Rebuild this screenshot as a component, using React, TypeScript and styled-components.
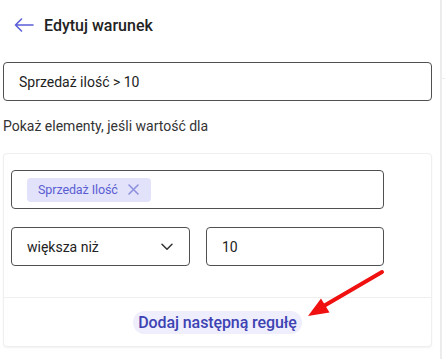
import React from "react";
import styled, { createGlobalStyle } from "styled-components";

const GlobalStyle = createGlobalStyle`
  html, body {
    margin: 0;
    padding: 0;
    background: #ffffff;
  }
  body {
    font-family: Roboto, "Noto Sans", "Liberation Sans", sans-serif;
    color: #222;
  }
`;

const Page = styled.div`
  position: relative;
  display: flex;
  height: 359px;
  width: 445px;
  overflow: hidden;
`;

const Main = styled.div`
  width: 429px;
  padding-left: 3px;
  display: flex;
  flex-direction: column;
`;

const Side = styled.div`
  margin-left: 8px;
  flex: 1;
  border-left: 2px solid #ececec;
  padding-top: 78px;
`;

const SideRule = styled.div`
  height: 1px;
  background: #eeeeee;
`;

const Header = styled.div`
  height: 50px;
  display: flex;
  align-items: center;
  gap: 10px;
  padding-left: 11px;
`;

const BackButton = styled.button`
  display: flex;
  align-items: center;
  border: none;
  background: none;
  padding: 0;
  color: #5b5fd6;
`;

const Title = styled.h1`
  margin: 0;
  font-size: 16px;
  font-weight: 500;
  color: #222;
`;

const TextField = styled.div<{ $width?: number }>`
  box-sizing: border-box;
  height: 39px;
  width: ${(p) => (p.$width ? `${p.$width}px` : "100%")};
  border: 1px solid #505050;
  border-radius: 4px;
  display: flex;
  align-items: center;
  justify-content: space-between;
  padding: 0 16px 0 15px;
  font-size: 14px;
  color: #222;
`;

const NameField = styled(TextField)`
  margin-top: 12px;
`;

const Label = styled.p`
  margin: 15px 0 0;
  line-height: 20px;
  font-size: 14px;
  color: #333;
`;

const Card = styled.div`
  margin-top: 17px;
  border: 1px solid #efefef;
  border-radius: 4px;
  box-shadow: 0 1px 2px rgba(0, 0, 0, 0.06);
  background: #fff;
`;

const CardBody = styled.div`
  padding: 16px 0 31px 7px;
  display: flex;
  flex-direction: column;
  gap: 18px;
`;

const Row = styled.div`
  display: flex;
  gap: 16px;
`;

const Chip = styled.span`
  display: inline-flex;
  align-items: center;
  gap: 10px;
  height: 24px;
  padding: 0 12px 0 11px;
  border-radius: 4px;
  background: #e2e2fa;
  color: #5a5ed2;
  font-size: 12.5px;
  letter-spacing: -0.1px;
`;

const ChipClose = styled.span`
  display: flex;
  color: #8e91e0;
`;

const Footer = styled.div`
  border-top: 1px solid #efefef;
  height: 48px;
  display: flex;
  align-items: center;
  justify-content: center;
`;

const AddRule = styled.button`
  border: none;
  background: #eeeefc;
  border-radius: 12px;
  height: 23px;
  padding: 0 5px;
  font-family: inherit;
  font-size: 16px;
  font-weight: 500;
  letter-spacing: -0.1px;
  color: #3d42b3;
`;

const Annotation = styled.svg`
  position: absolute;
  left: 300px;
  top: 262px;
`;

export default function App() {
  return (
    <>
      <GlobalStyle />
      <Page>
        <Main>
          <Header>
            <BackButton>
              <svg width="20" height="14" viewBox="0 0 20 14" fill="none">
                <path
                  d="M19 7H1.5M7.5 1L1.5 7l6 6"
                  stroke="currentColor"
                  strokeWidth="1.6"
                  strokeLinecap="round"
                  strokeLinejoin="round"
                />
              </svg>
            </BackButton>
            <Title>Edytuj warunek</Title>
          </Header>
          <NameField>Sprzedaż ilość &gt; 10</NameField>
          <Label>Pokaż elementy, jeśli wartość dla</Label>
          <Card>
            <CardBody>
              <TextField $width={373}>
                <Chip>
                  Sprzedaż Ilość
                  <ChipClose>
                    <svg width="11" height="11" viewBox="0 0 11 11">
                      <path
                        d="M1 1l9 9M10 1l-9 9"
                        stroke="currentColor"
                        strokeWidth="1.6"
                        strokeLinecap="round"
                      />
                    </svg>
                  </ChipClose>
                </Chip>
              </TextField>
              <Row>
                <TextField $width={179}>
                  większa niż
                  <svg width="12" height="8" viewBox="0 0 12 8" fill="none">
                    <path
                      d="M1 1.2l5 5 5-5"
                      stroke="#333"
                      strokeWidth="1.5"
                      strokeLinecap="round"
                      strokeLinejoin="round"
                    />
                  </svg>
                </TextField>
                <TextField $width={178}>10</TextField>
              </Row>
            </CardBody>
            <Footer>
              <AddRule>Dodaj następną regułę</AddRule>
            </Footer>
          </Card>
        </Main>
        <Side>
          <SideRule />
        </Side>
        <Annotation width="90" height="60" viewBox="300 262 90 60">
          <path d="M382 272L322 307" stroke="#f01010" strokeWidth="4" strokeLinecap="round" />
          <path d="M308 316L321 298.5L329.5 312.5Z" fill="#f01010" />
        </Annotation>
      </Page>
    </>
  );
}
